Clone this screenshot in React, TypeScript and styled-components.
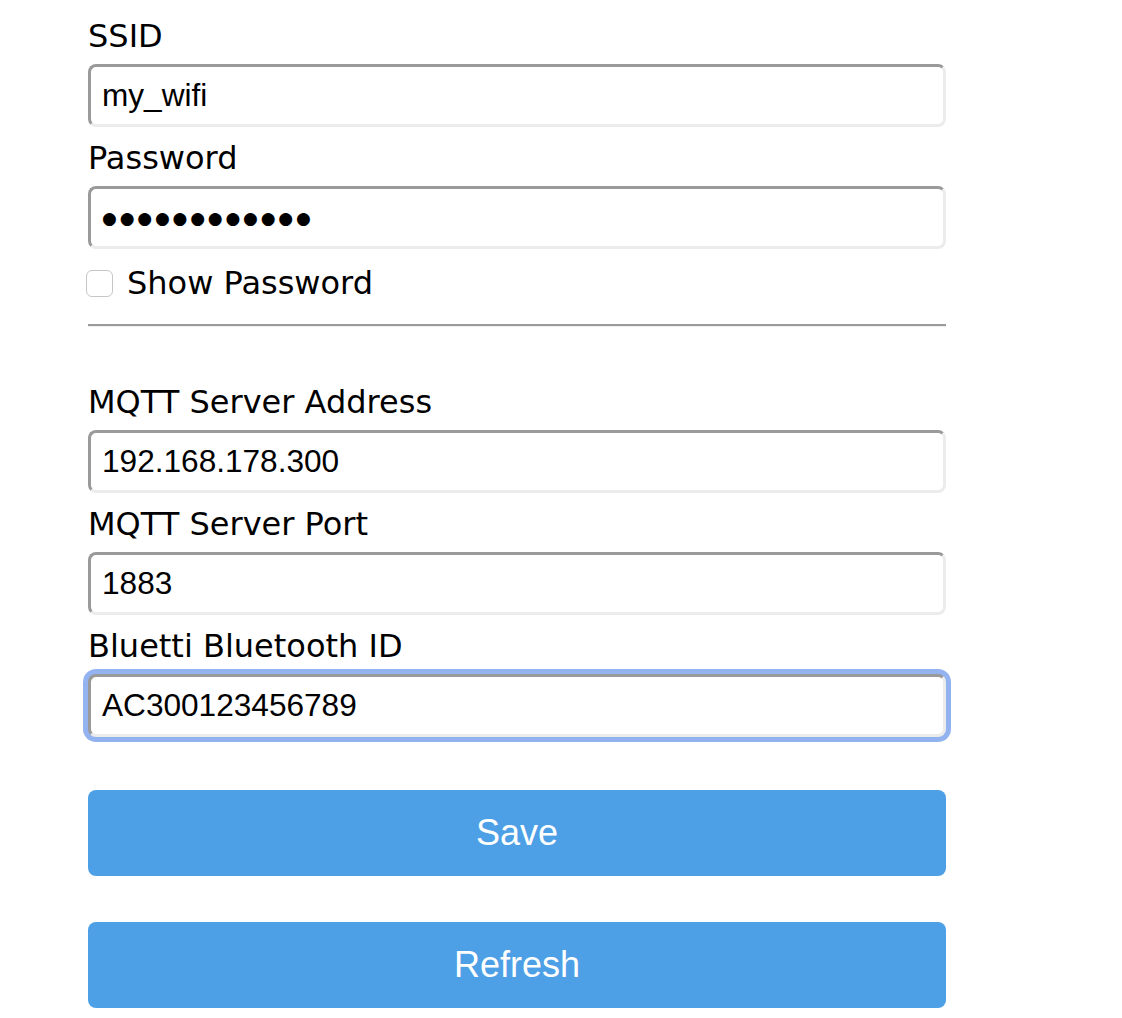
import React, { useEffect, useRef } from "react";
import styled, { createGlobalStyle, css } from "styled-components";

const Global = createGlobalStyle`
  html, body { margin: 0; padding: 0; background: #ffffff; }
  body { font-family: "DejaVu Sans", Verdana, sans-serif; color: #000; }
`;

const Page = styled.div`
  padding: 19px 0 0 88px;
  width: 858px;
  display: flex;
  flex-direction: column;
`;

const Field = styled.div<{ $last?: boolean }>`
  display: flex;
  flex-direction: column;
  margin-bottom: ${(p) => (p.$last ? 0 : 14)}px;
`;

const Label = styled.label`
  font-family: "DejaVu Sans", Verdana, sans-serif;
  font-size: 32px;
  line-height: 35px;
  height: 35px;
  margin-bottom: 10px;
  white-space: nowrap;
`;

const Input = styled.input<{ $focused?: boolean; $secret?: boolean }>`
  box-sizing: border-box;
  width: 858px;
  height: 63px;
  margin: 0;
  padding: 0 12px 0 11px;
  border-style: solid;
  border-width: 3px;
  border-color: #9a9a9a #ececec #ececec #9a9a9a;
  border-radius: 8px;
  background: #fff;
  font-family: "Liberation Sans", Arial, sans-serif;
  font-size: 31.6px;
  color: #000;
  outline: none;
  caret-color: #000;
  ${(p) =>
    p.$secret &&
    css`
      font-family: "DejaVu Sans", sans-serif;
      font-size: 17px;
      letter-spacing: 2.8px;
    `}
  ${(p) =>
    p.$focused &&
    css`
      box-shadow: 0 0 0 5px #93b2f0;
    `}
`;

const CheckRow = styled.label`
  display: flex;
  align-items: center;
  gap: 14px;
  margin: 21px 0 0 -2px;
  height: 27px;
  font-size: 32px;
  line-height: 35px;
  white-space: nowrap;
`;

const Box = styled.span`
  box-sizing: border-box;
  width: 27px;
  height: 27px;
  border: 1px solid #c6c6c6;
  border-radius: 6px;
  background: #fff;
  flex: none;
`;

const Rule = styled.hr`
  margin: 27px 0 0 0;
  height: 0;
  border: 0;
  border-top: 2px solid #9a9a9a;
  border-bottom: 1px solid #eeeeee;
  width: 858px;
`;

const Spacer = styled.div<{ $h: number }>`
  height: ${(p) => p.$h}px;
  flex: none;
`;

const Button = styled.button`
  box-sizing: border-box;
  width: 858px;
  height: 86px;
  border: 0;
  border-radius: 8px;
  background: #4ea0e6;
  color: #fff;
  font-family: "Liberation Sans", Arial, sans-serif;
  font-size: 36px;
  padding: 0;
  cursor: pointer;
`;

export default function App() {
  const ref = useRef<HTMLInputElement>(null);
  useEffect(() => {
    const el = ref.current;
    if (el) {
      el.focus();
      const n = el.value.length;
      el.setSelectionRange(n, n);
    }
  }, []);
  return (
    <>
      <Global />
      <Page>
        <Field>
          <Label htmlFor="ssid">SSID</Label>
          <Input id="ssid" defaultValue="my_wifi" />
        </Field>
        <Field $last>
          <Label htmlFor="pw">Password</Label>
          <Input id="pw" $secret defaultValue={"\u25CF".repeat(12)} />
        </Field>
        <CheckRow>
          <Box />
          Show Password
        </CheckRow>
        <Rule />
        <Spacer $h={58} />
        <Field>
          <Label htmlFor="mqtt">MQTT Server Address</Label>
          <Input id="mqtt" defaultValue="192.168.178.300" />
        </Field>
        <Field>
          <Label htmlFor="port">MQTT Server Port</Label>
          <Input id="port" defaultValue="1883" />
        </Field>
        <Field $last>
          <Label htmlFor="bt">Bluetti Bluetooth ID</Label>
          <Input id="bt" ref={ref} $focused defaultValue="AC300123456789" />
        </Field>
        <Spacer $h={53} />
        <Button>Save</Button>
        <Spacer $h={46} />
        <Button>Refresh</Button>
      </Page>
    </>
  );
}
